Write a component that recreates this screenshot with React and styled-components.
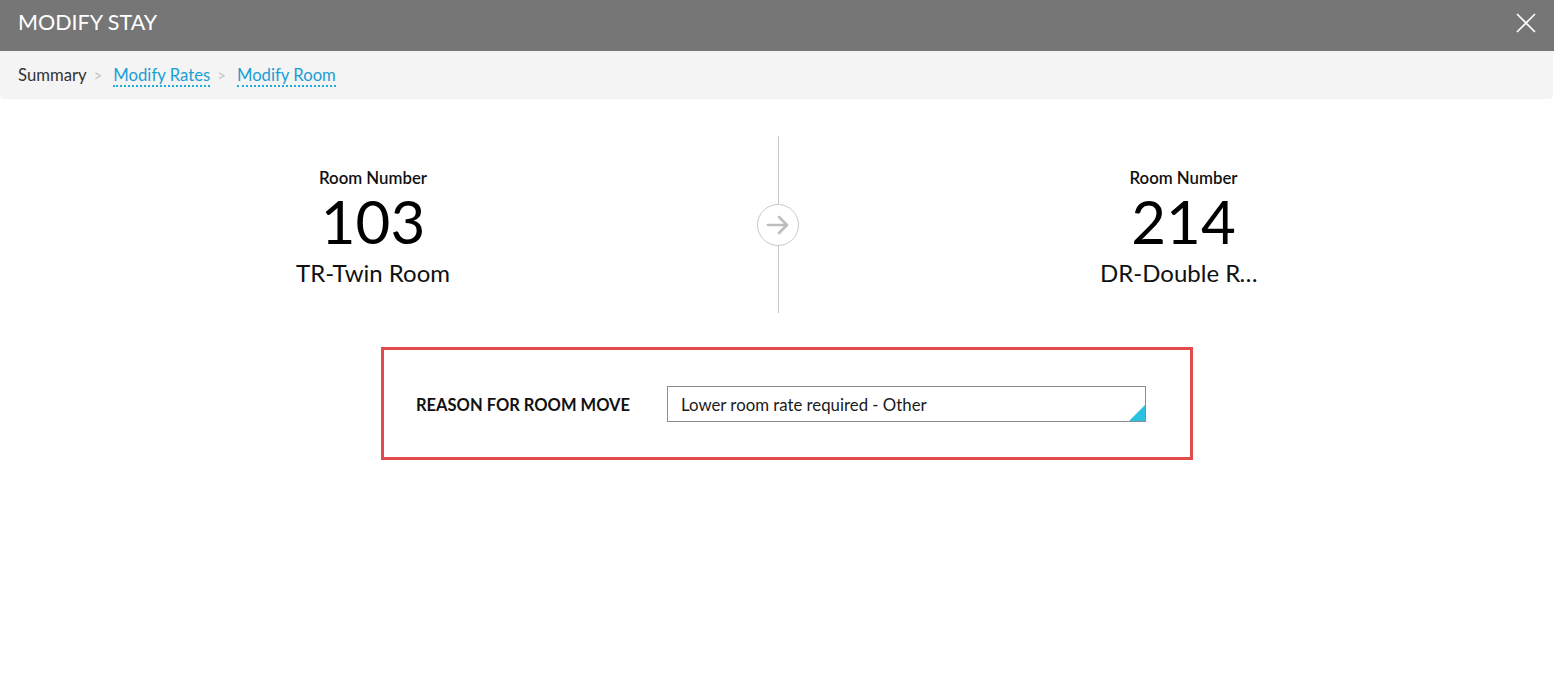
import React from "react";
import styled, { createGlobalStyle } from "styled-components";

const Global = createGlobalStyle`
  html, body { margin: 0; padding: 0; background: #fff; }
  body { font-family: Lato, "Open Sans", Arial, sans-serif; color: #111; }
  * { box-sizing: border-box; }
`;

const Page = styled.div`
  width: 1554px;
  min-height: 691px;
  background: #fff;
`;

const TitleBar = styled.header`
  height: 51px;
  background: #767676;
  display: flex;
  align-items: center;
  justify-content: space-between;
  padding: 0 16px 0 18px;
`;

const Title = styled.h1`
  margin: 0;
  font-size: 21.5px;
  line-height: 26px;
  font-weight: 400;
  color: #fff;
  text-transform: uppercase;
  padding-bottom: 7px;
`;

const CloseButton = styled.button`
  width: 24px;
  height: 24px;
  border: 0;
  padding: 0;
  background: transparent;
  cursor: pointer;
  display: flex;
  align-items: center;
  justify-content: center;
  margin-top: -5px;
`;

const Crumbs = styled.nav`
  height: 48px;
  background: #f4f4f4;
  border-radius: 0 0 4px 4px;
  display: flex;
  align-items: center;
  padding: 0 18px;
  font-size: 16.7px;
  margin-right: 1px;
`;

const Crumb = styled.span`
  color: ${(p) => (p.$link ? "#1a9ed3" : "#333")};
  border-bottom: ${(p) => (p.$link ? "2px dotted #1aaed9" : "2px solid transparent")};
  line-height: 20px;
  padding-top: 1px;
  cursor: ${(p) => (p.$link ? "pointer" : "default")};
`;

const Sep = styled.span`
  color: #c2c2c2;
  font-size: 15px;
  margin: 0 11px 0 7px;
`;

const Rooms = styled.section`
  display: grid;
  grid-template-columns: 1fr 62px 1fr;
  height: 177px;
  margin-top: 37px;
`;

const RoomCol = styled.div`
  display: flex;
  flex-direction: column;
  align-items: center;
  padding-top: 32px;
  padding-left: ${(p) => (p.$after ? "5px" : "0")};
`;

const RoomLabel = styled.div`
  font-size: 16.8px;
  font-weight: 600;
  line-height: 20px;
  color: #111;
`;

const RoomNo = styled.div`
  font-size: 60px;
  line-height: 60px;
  font-weight: 400;
  color: #000;
  margin-top: 3px;
`;

const RoomName = styled.div`
  font-size: 24px;
  line-height: 28px;
  margin-top: 8px;
  max-width: 167px;
  white-space: nowrap;
  overflow: hidden;
  text-overflow: ellipsis;
  color: #111;
`;

const Divider = styled.div`
  position: relative;
  display: flex;
  align-items: center;
  justify-content: center;
  &::before {
    content: "";
    position: absolute;
    left: calc(50% + 1px);
    top: 0;
    bottom: 0;
    width: 1px;
    background: #c8c8c8;
  }
`;

const ArrowBadge = styled.div`
  position: relative;
  width: 42px;
  height: 42px;
  margin-left: 2px;
  border-radius: 50%;
  border: 1px solid #c9c9c9;
  background: #fff;
  display: flex;
  align-items: center;
  justify-content: center;
`;

const ReasonBox = styled.section`
  margin: 34px 0 0 381px;
  width: 812px;
  height: 113px;
  border: 3px solid #e24b4b;
  display: flex;
  align-items: center;
  padding: 0 0 0 32px;
`;

const ReasonLabel = styled.label`
  font-size: 16.5px;
  font-weight: 700;
  color: #111;
  width: 251px;
  margin-top: 2px;
`;

const SelectBox = styled.div`
  position: relative;
  width: 479px;
  height: 36px;
  border: 1px solid #8c8c8c;
  display: flex;
  align-items: center;
  padding: 1px 0 0 13px;
  font-size: 16.8px;
  color: #1a1a1a;
  &::after {
    content: "";
    position: absolute;
    right: 0;
    bottom: 0;
    width: 0;
    height: 0;
    border-style: solid;
    border-width: 0 0 16px 16px;
    border-color: transparent transparent #29c0e2 transparent;
  }
`;

const rooms = [
  { number: "103", name: "TR-Twin Room" },
  { number: "214", name: "DR-Double Room" },
];

function RoomCard({ number, name, after }) {
  return (
    <RoomCol $after={after}>
      <RoomLabel>Room Number</RoomLabel>
      <RoomNo>{number}</RoomNo>
      <RoomName title={name}>{name}</RoomName>
    </RoomCol>
  );
}

export default function App() {
  return (
    <Page>
      <Global />
      <TitleBar>
        <Title>Modify Stay</Title>
        <CloseButton aria-label="Close">
          <svg width="22" height="22" viewBox="0 0 22 22">
            <path d="M2 2 L20 20 M20 2 L2 20" stroke="#fff" strokeWidth="1.6" />
          </svg>
        </CloseButton>
      </TitleBar>
      <Crumbs>
        <Crumb>Summary</Crumb>
        <Sep>&gt;</Sep>
        <Crumb $link>Modify Rates</Crumb>
        <Sep>&gt;</Sep>
        <Crumb $link>Modify Room</Crumb>
      </Crumbs>
      <Rooms>
        <RoomCard {...rooms[0]} />
        <Divider>
          <ArrowBadge>
            <svg width="26" height="26" viewBox="0 0 26 26">
              <path
                d="M3 13 H22 M14 5 L22 13 L14 21"
                fill="none"
                stroke="#bdbdbd"
                strokeWidth="2.6"
                strokeLinecap="round"
                strokeLinejoin="round"
              />
            </svg>
          </ArrowBadge>
        </Divider>
        <RoomCard {...rooms[1]} after />
      </Rooms>
      <ReasonBox>
        <ReasonLabel>REASON FOR ROOM MOVE</ReasonLabel>
        <SelectBox>Lower room rate required - Other</SelectBox>
      </ReasonBox>
    </Page>
  );
}
